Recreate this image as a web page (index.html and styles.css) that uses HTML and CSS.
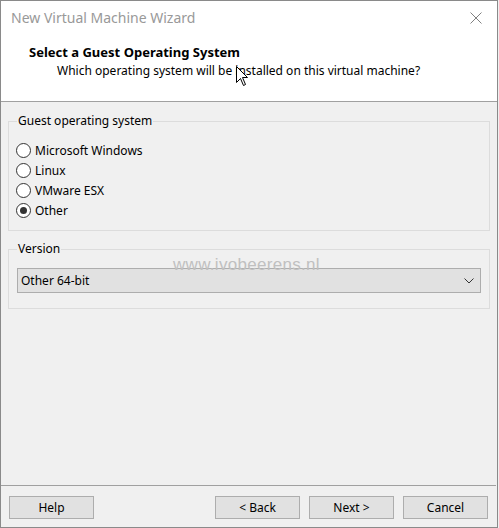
FILE: index.html
```html
<!DOCTYPE html>
<html>
<head>
<meta charset="utf-8">
<link rel="stylesheet" href="styles.css">
</head>
<body>
<div class="window">
  <div class="top">
    <div class="titlebar">
      <span class="title">New Virtual Machine Wizard</span>
      <svg class="close" width="12" height="12" viewBox="0 0 12 12"><path d="M0.5 0.5 L11.5 11.5 M11.5 0.5 L0.5 11.5" stroke="#808080" stroke-width="1" fill="none"/></svg>
    </div>
    <div class="heading">
      <div class="h1">Select a Guest Operating System</div>
      <div class="h2">Which operating system will be installed on this virtual machine?</div>
    </div>
  </div>
  <div class="content">
    <fieldset class="group group-os">
      <legend>Guest operating system</legend>
      <div class="radios">
        <label class="radio"><span class="dot"></span>Microsoft Windows</label>
        <label class="radio"><span class="dot"></span>Linux</label>
        <label class="radio"><span class="dot"></span>VMware ESX</label>
        <label class="radio"><span class="dot checked"></span>Other</label>
      </div>
    </fieldset>
    <fieldset class="group group-ver">
      <legend>Version</legend>
      <div class="select">
        <span>Other 64-bit</span>
        <svg width="10" height="6" viewBox="0 0 10 6"><path d="M0.5 0.5 L5 5 L9.5 0.5" stroke="#333" stroke-width="1" fill="none"/></svg>
      </div>
    </fieldset>
  </div>
  <div class="footer">
    <button class="btn">Help</button>
    <div class="spacer"></div>
    <button class="btn">&lt; Back</button>
    <button class="btn">Next &gt;</button>
    <button class="btn">Cancel</button>
  </div>
  <div class="watermark">www.ivobeerens.nl</div>
  <svg class="cursor" width="13" height="21" viewBox="0 0 13 21"><path d="M0.5 0.5 L0.5 16.5 L4.5 12.5 L7.5 19.5 L9.5 18.5 L6.5 11.5 L11.5 11.5 Z" fill="#fff" stroke="#000" stroke-width="1" stroke-linejoin="miter"/></svg>
</div>
</body>
</html>
```
FILE: styles.css
```css
html, body {
  margin: 0;
  padding: 0;
  background: #f0f0f0;
}
body {
  font-family: "Noto Sans", "Open Sans", sans-serif;
  font-size: 12px;
  color: #000;
}
.window {
  position: relative;
  width: 498px;
  height: 528px;
  box-sizing: border-box;
  border: 1px solid #8a8a8a;
  background: #f0f0f0;
  display: flex;
  flex-direction: column;
  overflow: hidden;
}
.top {
  background: #fff;
  height: 101px;
  box-sizing: border-box;
  border-bottom: 1px solid #a0a0a0;
}
.titlebar {
  display: flex;
  align-items: center;
  justify-content: space-between;
  height: 34px;
  padding: 0 15px 0 10px;
}
.title {
  font-size: 14px;
  color: #999;
  line-height: 20px;
  margin-top: -1px;
}
.close {
  margin-top: -1px;
}
.heading {
  padding: 8px 0 0 28px;
}
.h1 {
  font-weight: bold;
  font-size: 13px;
  line-height: 18px;
}
.h2 {
  padding-left: 28px;
  line-height: 18px;
  margin-top: 1px;
}
.content {
  flex: 1;
  padding: 0 7px;
}
.group {
  margin: 11px 0 0 0;
  border: 1px solid #dcdcdc;
  padding: 0 8px;
  min-width: 0;
}
.group legend {
  padding: 0 1px;
  line-height: 16px;
}
.radios {
  display: flex;
  flex-direction: column;
  padding: 11px 0 10px 0;
}
.radio {
  display: flex;
  align-items: center;
  height: 20px;
  gap: 4px;
  margin-left: -1px;
}
.dot {
  width: 13px;
  height: 13px;
  border: 1px solid #333;
  border-radius: 50%;
  background: #fff;
  display: flex;
  align-items: center;
  justify-content: center;
}
.dot.checked::after {
  content: "";
  width: 7px;
  height: 7px;
  border-radius: 50%;
  background: #333;
}
.group-ver {
  margin-top: 10px;
}
.select {
  margin-top: 11px;
  margin-bottom: 15px;
  height: 25px;
  box-sizing: border-box;
  border: 1px solid #adadad;
  background: #e1e1e1;
  display: flex;
  align-items: center;
  justify-content: space-between;
  padding: 0 6px 0 3px;
}
.footer {
  border-top: 1px solid #a0a0a0;
  margin-right: 1px;
  display: flex;
  gap: 9px;
  padding: 10px 8px 8px 8px;
}
.spacer {
  flex: 1;
}
.btn {
  width: 85px;
  height: 23px;
  border: 1px solid #adadad;
  background: #e1e1e1;
  font-family: inherit;
  font-size: 12px;
  color: #000;
  padding: 0;
}
.watermark {
  position: absolute;
  left: 172px;
  top: 254px;
  font-family: "Liberation Sans", Arial, sans-serif;
  font-size: 17px;
  color: #c0c0c0;
  letter-spacing: 0.3px;
}
.cursor {
  position: absolute;
  left: 235px;
  top: 65px;
}
```
